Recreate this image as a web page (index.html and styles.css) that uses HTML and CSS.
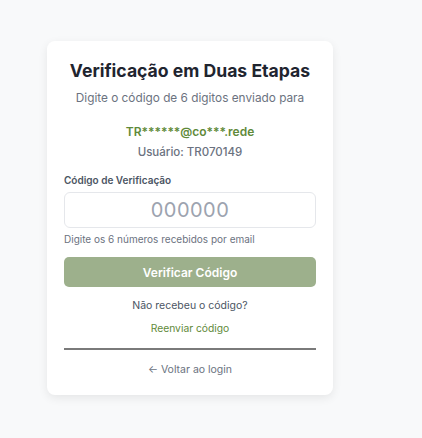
FILE: index.html
```html
<!DOCTYPE html>
<html lang="pt-BR">
<head>
    <meta charset="UTF-8">
    <meta name="viewport" content="width=device-width, initial-scale=1.0">
    <title>Verificação em Duas Etapas</title>
    <link rel="stylesheet" href="styles.css">
</head>
<body>
    <div class="card">
        <h1 class="title">Verificação em Duas Etapas</h1>
        <p class="subtitle">Digite o código de 6 digitos enviado para</p>
        <p class="email">TR******@co***.rede</p>
        <p class="user">Usuário: TR070149</p>

        <form class="form" onsubmit="return false">
            <label class="label" for="code">Código de Verificação</label>
            <input class="code-input" id="code" type="text" maxlength="6" placeholder="000000">
            <p class="hint">Digite os 6 números recebidos por email</p>
            <button class="btn-verify" type="submit">Verificar Código</button>
        </form>

        <p class="resend-text">Não recebeu o código?</p>
        <a class="resend-link" href="#">Reenviar código</a>
        <hr class="divider">
        <a class="back-link" href="#">&larr; Voltar ao login</a>
    </div>
</body>
</html>
```

FILE: styles.css
```css
body {
    font-family: Inter, "Noto Sans", sans-serif;
    margin: 0;
    padding: 41px 0 0 47px;
    background-color: #f8f9fa;
    min-height: 438px;
    box-sizing: border-box;
}
.card {
    width: 286px;
    box-sizing: border-box;
    background: white;
    border-radius: 8px;
    padding: 18px 17px 18px;
    box-shadow: 0 3px 10px rgba(0,0,0,0.08);
    text-align: center;
}
.title {
    margin: 0;
    font-size: 17.6px;
    line-height: 24px;
    font-weight: 700;
    color: #1f2530;
}
.subtitle {
    margin: 8px 0 0;
    font-size: 11.8px;
    line-height: 14px;
    color: #6b7280;
}
.email {
    margin: 20px 0 0;
    font-size: 12px;
    line-height: 14px;
    font-weight: 600;
    color: #5f8a3a;
}
.user {
    margin: 6px 0 0;
    font-size: 11.5px;
    line-height: 14px;
    font-weight: 500;
    color: #6b7280;
}
.form {
    text-align: left;
    margin-top: 15px;
}
.label {
    display: block;
    font-size: 10px;
    line-height: 12px;
    font-weight: 600;
    color: #4b5563;
}
.code-input {
    display: block;
    width: 100%;
    height: 36px;
    margin-top: 6px;
    box-sizing: border-box;
    border: 1px solid #e5e7eb;
    border-radius: 6px;
    text-align: center;
    font-family: Inter, "Noto Sans", sans-serif;
    font-size: 20px;
    letter-spacing: 0.5px;
    color: #374151;
}
.code-input::placeholder {
    color: #9ca3af;
}
.hint {
    margin: 5px 0 0;
    font-size: 10px;
    line-height: 12px;
    color: #6b7280;
}
.btn-verify {
    display: block;
    width: 100%;
    height: 30px;
    margin-top: 12px;
    background-color: #9db08c;
    color: white;
    border: none;
    border-radius: 5px;
    font-family: Inter, "Noto Sans", sans-serif;
    font-size: 12px;
    font-weight: 600;
    cursor: pointer;
}
.resend-text {
    margin: 12px 0 0;
    font-size: 10.5px;
    line-height: 14px;
    color: #4b5563;
}
.resend-link {
    display: block;
    margin-top: 8px;
    font-size: 10.3px;
    line-height: 14px;
    color: #5f8a3a;
    text-decoration: none;
}
.divider {
    margin: 13px 0 0;
    border: none;
    height: 2px;
    background: #7a7a7a;
}
.back-link {
    display: block;
    margin-top: 13px;
    font-size: 10.5px;
    line-height: 14px;
    color: #6b7280;
    text-decoration: none;
}
```
